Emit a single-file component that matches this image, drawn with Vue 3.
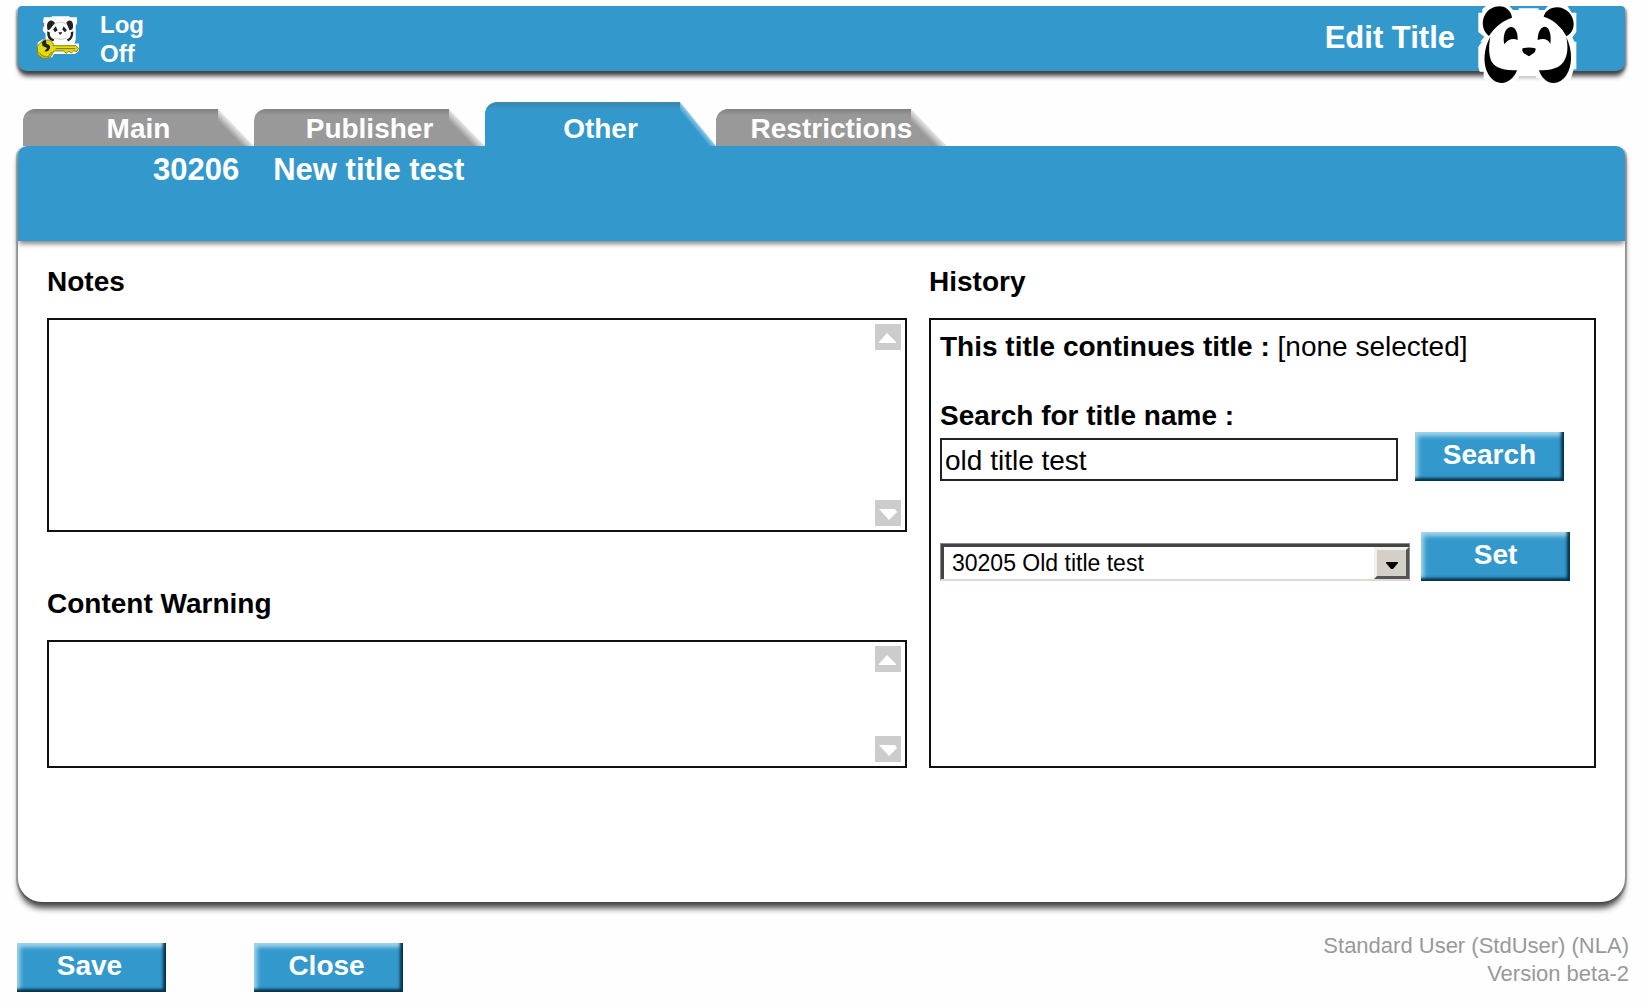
<script setup>
import { ref } from 'vue'

const tabs = ['Main', 'Publisher', 'Other', 'Restrictions']
const activeTab = ref('Other')
const notes = ref('')
const warning = ref('')
const query = ref('old title test')
const results = ['30205 Old title test']
const selected = ref(results[0])
</script>

<template>
  <div class="page">
    <header class="topbar">
      <a class="logoff" href="#">
        <svg class="key-icon" viewBox="106 46 134 136" aria-hidden="true">
          <path d="M130 52h24v-3h54v3h23v18l-4 8v42l-4 12h14v22l-12 10h-64l-6 10h-18l-8-6h-12l-6-16v-22l14-10h10v-18l-8-8v-10l4-4v-12h-4z" fill="#fff" />
          <path d="M142 92q-6-18 2-26 8-8 16 0l4 4-16 20zM198 68q10-10 18-2 6 12 0 24l-8 2zM142 96l6 2q-2 16 14 22l-4 6q-20-4-18-30zM218 96l-6 2q2 16-12 22l4 6q16-6 16-30z" fill="#222" />
          <path d="M158 90l8-10 6 12-8 6zM186 90l4-10 10 12-6 6zM174 98h12l-4 7h-4z" fill="#222" />
          <path d="M162 74q18-14 36 0M162 116q20 8 38 0" fill="none" stroke="#ccc" stroke-width="3" />
          <path d="M128 122h20l10 10v7h70l8 9-7 9-8-3-7 7-8-5-8 6-8-7h-30l-6 14-12 8h-16l-14-10-2-26z" fill="#e3dc12" stroke="#84800b" stroke-width="3" />
          <path d="M166 148h60" stroke="#777300" stroke-width="3" />
          <path d="M116 160q10 16 28 12l10-14" fill="none" stroke="#a7a008" stroke-width="5" />
          <path d="M124 128l12-8 2 14q14 2 10 14-6 12-16 8l8-10-14-6z" fill="#222" />
        </svg>
        <span class="logoff-text">Log<br />Off</span>
      </a>
      <h1 class="page-name">Edit Title</h1>
      <svg class="panda" viewBox="530 15 300 240" aria-hidden="true">
        <path d="M534 38H546V27L560 16H625L638 30H655V25H715V30H732L745 16H800L814 38H828V96L816 112L822 125H828V208H820L812 235L790 252H735L715 234H655L630 252H580L550 235V215H538L534 200V140L545 125H540L552 110L534 96Z" fill="#fff" />
        <path d="M655 231h52" stroke="#bbb" stroke-width="4" />
        <path d="M566 108c-20-14-24-44-12-64 14-24 46-32 66-18 10 7 14 17 15 27-26 8-52 28-69 55z" />
        <path d="M730 50c4-16 20-28 40-28 28 0 50 24 50 50 0 16-8 30-22 37-14-28-38-50-68-59z" />
        <path d="M570 110c-20 34-24 82-6 113 10 17 24 26 40 26 20 0 38-16 46-38-36 0-64-6-76-26-8-16-10-45-4-75z" />
        <path d="M798 112c18 36 20 84 0 114-10 15-24 23-38 23-22 0-38-18-44-38 34 0 60-6 74-26 12-18 14-43 8-73z" />
        <path d="M612 133c-6-22 2-52 20-52 14 0 21 18 20 39-14-6-30-2-40 13z" />
        <path d="M750 132c-6-14-20-18-38-12 0-24 10-40 22-40 14 0 20 28 16 52z" />
        <path d="M667 145q18-5 38 0c4 8-6 17-12 19l-7 5-8-5c-8-3-15-10-11-19z" />
      </svg>
    </header>

    <nav class="tabs">
      <a
        v-for="tab in tabs"
        :key="tab"
        href="#"
        class="tab"
        :class="{ active: tab === activeTab }"
        @click.prevent="activeTab = tab"
      >{{ tab }}</a>
    </nav>

    <main class="panel">
      <div class="banner">
        <span>30206</span>
        <span>New title test</span>
      </div>
      <div class="columns">
        <div class="column">
          <label class="heading" for="notes">Notes</label>
          <div class="box notes">
            <textarea id="notes" v-model="notes"></textarea>
            <div class="scroller">
              <button type="button" class="arrow" aria-label="Scroll up"><svg viewBox="0 0 26 26"><path d="M4 18L12 9l9 9v1H4z" /></svg></button>
              <button type="button" class="arrow" aria-label="Scroll down"><svg viewBox="0 0 26 26"><path d="M4 9h16l2 3-8 8z" /></svg></button>
            </div>
          </div>
          <label class="heading second" for="warning">Content Warning</label>
          <div class="box warning">
            <textarea id="warning" v-model="warning"></textarea>
            <div class="scroller">
              <button type="button" class="arrow" aria-label="Scroll up"><svg viewBox="0 0 26 26"><path d="M4 18L12 9l9 9v1H4z" /></svg></button>
              <button type="button" class="arrow" aria-label="Scroll down"><svg viewBox="0 0 26 26"><path d="M4 9h16l2 3-8 8z" /></svg></button>
            </div>
          </div>
        </div>

        <section class="column">
          <h2 class="heading">History</h2>
          <div class="box history">
            <p class="line"><b>This title continues title :</b> [none selected]</p>
            <label class="line search-label" for="query">Search for title name :</label>
            <div class="row search-row">
              <input id="query" v-model="query" class="query" type="text" />
              <button type="button" class="btn">Search</button>
            </div>
            <div class="row set-row">
              <div class="picker">
                <select v-model="selected" aria-label="Matching titles">
                  <option v-for="item in results" :key="item">{{ item }}</option>
                </select>
                <span class="drop" aria-hidden="true"><svg viewBox="0 0 12 7"><path d="M0 0h12v1L7 7H5L0 1z" /></svg></span>
              </div>
              <button type="button" class="btn">Set</button>
            </div>
          </div>
        </section>
      </div>
    </main>

    <footer class="footer">
      <div class="actions">
        <button type="button" class="btn">Save</button>
        <button type="button" class="btn">Close</button>
      </div>
      <p class="status">Standard User (StdUser) (NLA)<br />Version beta-2</p>
    </footer>
  </div>
</template>

<style>
body {
  background: #fefefe;
}
</style>

<style scoped>
* {
  box-sizing: border-box;
}

.page {
  padding: 6px 24px 12px 18px;
  font-family: "Liberation Sans", Arial, sans-serif;
  font-size: 28px;
  line-height: 32px;
  color: #000;
}

h1, h2, p {
  margin: 0;
}

.topbar {
  display: flex;
  align-items: flex-start;
  height: 65px;
  padding-right: 48px;
  background: #39c;
  border-radius: 4px 4px 9px 9px;
  box-shadow: 0 6px 5px -1px #444, -2px 2px 2px #aaa, 2px 2px 2px #aaa;
  color: #fff;
}

.logoff {
  display: flex;
  gap: 20px;
  padding-left: 18px;
  color: #fff;
  text-decoration: none;
  font-size: 24px;
  font-weight: bold;
  line-height: 29px;
}

.key-icon {
  width: 44px;
  height: 45px;
  margin-top: 9px;
}

.logoff-text {
  padding-top: 4px;
}

.page-name {
  margin-left: auto;
  padding: 15px 22px 0 0;
  font-size: 31px;
  line-height: 34px;
}

.panda {
  width: 100px;
  height: 80px;
  margin-top: -1px;
}

.tabs {
  display: flex;
  align-items: flex-end;
  height: 44px;
  margin-top: 31px;
  padding-left: 5px;
}

.tab {
  width: 231px;
  height: 37px;
  padding-top: 4px;
  border-top-left-radius: 12px;
  background:
    linear-gradient(to top right, #999 34%, #e4e4e4 49%, transparent 51%) right / 36px 100% no-repeat,
    linear-gradient(#808080, #999 6px) left / calc(100% - 36px) 100% no-repeat;
  color: #fff;
  font-weight: bold;
  text-align: center;
  text-decoration: none;
}

.tab.active {
  height: 44px;
  padding-top: 11px;
  background:
    linear-gradient(to top right, #39c 40%, #8cc6e6 49%, transparent 51%) right / 36px 100% no-repeat,
    linear-gradient(#3f83aa, #39c 8px) left / calc(100% - 36px) 100% no-repeat;
}

.panel {
  background: #fff;
  border-radius: 9px 9px 24px 24px;
  box-shadow: 0 7px 6px -1px #444, -2px 1px 1px #b4b4b4, 2px 1px 1px #b4b4b4;
}

.banner {
  display: flex;
  gap: 34px;
  height: 95px;
  padding: 3px 0 0 135px;
  background: #39c;
  border-radius: 9px 9px 0 0;
  box-shadow: 0 4px 5px -1px #888;
  color: #fff;
  font-size: 31px;
  font-weight: bold;
  line-height: 42px;
}

.columns {
  display: grid;
  grid-template-columns: 860fr 667fr;
  gap: 22px;
  padding: 25px 29px 134px;
}

.column {
  display: flex;
  flex-direction: column;
}

.heading {
  margin-bottom: 20px;
  font-size: 28px;
  font-weight: bold;
}

.second {
  margin-top: 56px;
}

.box {
  display: flex;
  border: 2px solid #111;
  background: #fff;
}

.notes {
  height: 214px;
}

.warning {
  height: 128px;
}

textarea {
  flex: 1;
  padding: 4px;
  border: 0;
  outline: 0;
  resize: none;
  background: transparent;
  font: inherit;
}

.scroller {
  display: flex;
  flex-direction: column;
  justify-content: space-between;
  padding: 4px;
}

.arrow {
  width: 26px;
  height: 26px;
  padding: 0;
  border: 0;
  background: #ccc;
}

.arrow svg {
  display: block;
  fill: #fff;
}

.history {
  flex: 1;
  flex-direction: column;
  padding: 11px 0 0 9px;
}

.search-label {
  margin-top: 37px;
  font-weight: bold;
}

.row {
  display: flex;
  align-items: flex-end;
}

.search-row {
  gap: 17px;
  padding-right: 30px;
}

.set-row {
  gap: 11px;
  margin-top: 51px;
  padding-right: 24px;
}

.query {
  flex: 1;
  min-width: 0;
  height: 43px;
  padding: 2px 3px 0;
  border: 2px solid #222;
  border-radius: 0;
  outline: 0;
  font: inherit;
}

.picker {
  position: relative;
  flex: 1;
  height: 38px;
  border: 1px solid #888;
  border-bottom: 2px solid #dedbd3;
  background: #fff;
}

select {
  width: 100%;
  height: 100%;
  padding: 0 40px 0 8px;
  appearance: none;
  border: solid #444;
  border-width: 3px 0 0 3px;
  border-radius: 0;
  outline: 0;
  background: transparent;
  color: #000;
  font: 23px/32px "Liberation Sans", Arial, sans-serif;
}

.drop {
  position: absolute;
  top: 3px;
  right: 0;
  bottom: 0;
  display: flex;
  align-items: center;
  justify-content: center;
  width: 35px;
  border: 3px solid;
  border-color: #f2f0ea #555 #555 #f2f0ea;
  background: #d4d0c8;
  pointer-events: none;
}

.drop svg {
  width: 12px;
  height: 7px;
  margin-top: 4px;
}

.btn {
  flex: none;
  width: 149px;
  height: 49px;
  padding: 0 4px 4px 0;
  border: 0;
  background: #39c;
  box-shadow: inset -3px -3px 3px #05324b, inset 3px 4px 4px #a4d4ec;
  color: #fff;
  font: bold 28px/32px "Liberation Sans", Arial, sans-serif;
}

.row .btn {
  padding-right: 0;
}

.footer {
  display: flex;
  justify-content: space-between;
  margin: 30px -4px 0 -1px;
}

.actions {
  display: flex;
  gap: 88px;
  padding-top: 11px;
}

.status {
  color: #999;
  font-size: 22px;
  line-height: 28px;
  text-align: right;
}
</style>
